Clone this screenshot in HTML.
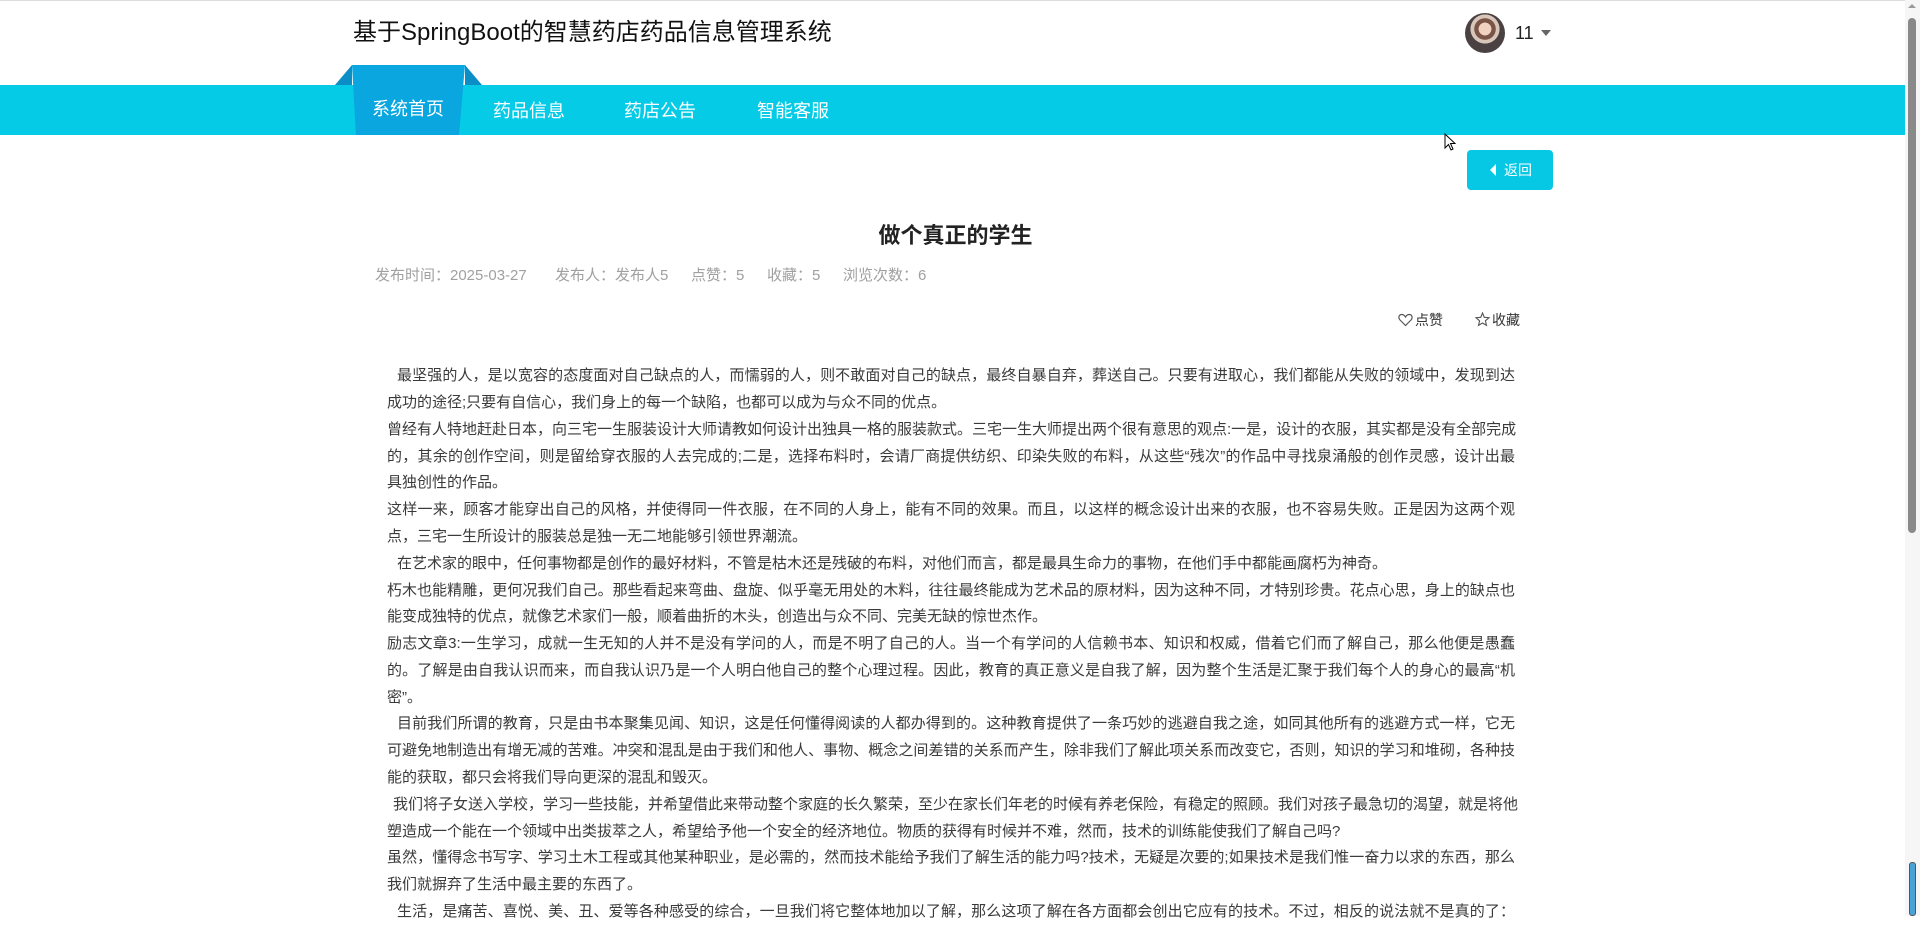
<!DOCTYPE html>
<html><head><meta charset="utf-8">
<style>
*{margin:0;padding:0;box-sizing:border-box}
html,body{width:1920px;height:916px;overflow:hidden;background:#fff;font-family:"Liberation Sans","Noto Sans CJK SC",sans-serif}
.a{position:absolute;white-space:nowrap}
.ln{position:absolute;left:387px;width:1128px;height:27px;line-height:27px;font-size:15px;color:#3a3a3a;white-space:nowrap;overflow:visible}
.f{text-align:justify;text-align-last:justify}
.meta{position:absolute;top:266px;font-size:15px;color:#a0a0a0;white-space:nowrap;line-height:20px}
</style></head><body>
<div class="a" style="left:0;top:0;width:1905px;height:1px;background:#dcdcdc"></div>
<div class="a" style="left:353px;top:16px;font-size:24px;line-height:34px;color:#111">基于SpringBoot的智慧药店药品信息管理系统</div>
<div class="a" style="left:1465px;top:13px;width:40px;height:40px;border-radius:50%;overflow:hidden;background:radial-gradient(circle at 50% 40%,#f1d2c0 0 20%,#7a5545 21% 34%,#d8c6ba 35% 46%,#4a4242 47% 100%)"></div>
<div class="a" style="left:1515px;top:21px;font-size:18px;line-height:24px;color:#222">11</div>
<div class="a" style="left:1541px;top:30px;width:0;height:0;border-left:5px solid transparent;border-right:5px solid transparent;border-top:6px solid #666"></div>
<div class="a" style="left:0;top:85px;width:1905px;height:50px;background:#05cbe6"></div>
<svg class="a" style="left:330px;top:60px" width="160" height="80" viewBox="330 60 160 80">
<polygon points="335,85 352,65 352,85" fill="#0b8ec5"/>
<polygon points="465,65 482,85 465,85" fill="#0b8ec5"/>
<polygon points="352,65 465,65 459,135 356,135" fill="#09a6df"/>
</svg>
<div class="a" style="left:372px;top:96px;font-size:18px;line-height:26px;color:#fff">系统首页</div>
<div class="a" style="left:493px;top:98px;font-size:18px;line-height:26px;color:#fff">药品信息</div>
<div class="a" style="left:624px;top:98px;font-size:18px;line-height:26px;color:#fff">药店公告</div>
<div class="a" style="left:757px;top:98px;font-size:18px;line-height:26px;color:#fff">智能客服</div>
<svg class="a" style="left:1444px;top:133px" width="14" height="20" viewBox="0 0 14 20"><path d="M1 1 L1 15 L4.5 11.5 L7 17 L9 16 L6.5 10.5 L11 10.5 Z" fill="#fff" stroke="#000" stroke-width="1"/></svg>
<div class="a" style="left:1467px;top:150px;width:86px;height:40px;border-radius:4px;background:#06c8e5"></div>
<div class="a" style="left:1490px;top:164px;width:0;height:0;border-top:6px solid transparent;border-bottom:6px solid transparent;border-right:6px solid #fff"></div>
<div class="a" style="left:1504px;top:160px;font-size:14px;line-height:20px;color:#fff">返回</div>
<div class="a" style="left:0;width:1905px;top:221px;text-align:center;font-size:22px;font-weight:bold;line-height:30px;color:#222"><span style="position:relative;left:3px">做个真正的学生</span></div>
<div class="meta" style="left:375px">发布时间：2025-03-27</div>
<div class="meta" style="left:555px">发布人：发布人5</div>
<div class="meta" style="left:691px">点赞：5</div>
<div class="meta" style="left:767px">收藏：5</div>
<div class="meta" style="left:843px">浏览次数：6</div>
<svg class="a" style="left:1398px;top:313px" width="15" height="14" viewBox="0 0 15 14"><path d="M7.5 12.5 L2 7 C0 5 0.8 1.5 3.8 1.5 C5.5 1.5 6.8 2.8 7.5 4 C8.2 2.8 9.5 1.5 11.2 1.5 C14.2 1.5 15 5 13 7 Z" fill="none" stroke="#555" stroke-width="1.2"/></svg>
<div class="a" style="left:1415px;top:310px;font-size:14px;line-height:20px;color:#333">点赞</div>
<svg class="a" style="left:1475px;top:312px" width="15" height="15" viewBox="0 0 15 15"><path d="M7.5 1 L9.3 5.3 L14 5.7 L10.4 8.8 L11.5 13.4 L7.5 11 L3.5 13.4 L4.6 8.8 L1 5.7 L5.7 5.3 Z" fill="none" stroke="#555" stroke-width="1.1"/></svg>
<div class="a" style="left:1492px;top:310px;font-size:14px;line-height:20px;color:#333">收藏</div>

<div class="ln f" style="top:362px;padding-left:10px">最坚强的人，是以宽容的态度面对自己缺点的人，而懦弱的人，则不敢面对自己的缺点，最终自暴自弃，葬送自己。只要有进取心，我们都能从失败的领域中，发现到达</div>
<div class="ln" style="top:389px">成功的途径;只要有自信心，我们身上的每一个缺陷，也都可以成为与众不同的优点。</div>
<div class="ln f" style="top:416px">曾经有人特地赶赴日本，向三宅一生服装设计大师请教如何设计出独具一格的服装款式。三宅一生大师提出两个很有意思的观点:一是，设计的衣服，其实都是没有全部完成</div>
<div class="ln f" style="top:443px">的，其余的创作空间，则是留给穿衣服的人去完成的;二是，选择布料时，会请厂商提供纺织、印染失败的布料，从这些“残次”的作品中寻找泉涌般的创作灵感，设计出最</div>
<div class="ln" style="top:469px">具独创性的作品。</div>
<div class="ln f" style="top:496px">这样一来，顾客才能穿出自己的风格，并使得同一件衣服，在不同的人身上，能有不同的效果。而且，以这样的概念设计出来的衣服，也不容易失败。正是因为这两个观</div>
<div class="ln" style="top:523px">点，三宅一生所设计的服装总是独一无二地能够引领世界潮流。</div>
<div class="ln" style="top:550px;padding-left:10px">在艺术家的眼中，任何事物都是创作的最好材料，不管是枯木还是残破的布料，对他们而言，都是最具生命力的事物，在他们手中都能画腐朽为神奇。</div>
<div class="ln f" style="top:577px">朽木也能精雕，更何况我们自己。那些看起来弯曲、盘旋、似乎毫无用处的木料，往往最终能成为艺术品的原材料，因为这种不同，才特别珍贵。花点心思，身上的缺点也</div>
<div class="ln" style="top:603px">能变成独特的优点，就像艺术家们一般，顺着曲折的木头，创造出与众不同、完美无缺的惊世杰作。</div>
<div class="ln f" style="top:630px">励志文章3:一生学习，成就一生无知的人并不是没有学问的人，而是不明了自己的人。当一个有学问的人信赖书本、知识和权威，借着它们而了解自己，那么他便是愚蠢</div>
<div class="ln f" style="top:657px">的。了解是由自我认识而来，而自我认识乃是一个人明白他自己的整个心理过程。因此，教育的真正意义是自我了解，因为整个生活是汇聚于我们每个人的身心的最高“机</div>
<div class="ln" style="top:684px">密”。</div>
<div class="ln f" style="top:710px;padding-left:10px">目前我们所谓的教育，只是由书本聚集见闻、知识，这是任何懂得阅读的人都办得到的。这种教育提供了一条巧妙的逃避自我之途，如同其他所有的逃避方式一样，它无</div>
<div class="ln f" style="top:737px">可避免地制造出有增无减的苦难。冲突和混乱是由于我们和他人、事物、概念之间差错的关系而产生，除非我们了解此项关系而改变它，否则，知识的学习和堆砌，各种技</div>
<div class="ln" style="top:764px">能的获取，都只会将我们导向更深的混乱和毁灭。</div>
<div class="ln f" style="top:791px;padding-left:6px">我们将子女送入学校，学习一些技能，并希望借此来带动整个家庭的长久繁荣，至少在家长们年老的时候有养老保险，有稳定的照顾。我们对孩子最急切的渴望，就是将他</div>
<div class="ln" style="top:818px">塑造成一个能在一个领域中出类拔萃之人，希望给予他一个安全的经济地位。物质的获得有时候并不难，然而，技术的训练能使我们了解自己吗?</div>
<div class="ln f" style="top:844px">虽然，懂得念书写字、学习土木工程或其他某种职业，是必需的，然而技术能给予我们了解生活的能力吗?技术，无疑是次要的;如果技术是我们惟一奋力以求的东西，那么</div>
<div class="ln" style="top:871px">我们就摒弃了生活中最主要的东西了。</div>
<div class="ln f" style="top:898px;padding-left:10px">生活，是痛苦、喜悦、美、丑、爱等各种感受的综合，一旦我们将它整体地加以了解，那么这项了解在各方面都会创出它应有的技术。不过，相反的说法就不是真的了：</div>

<div class="a" style="left:1905px;top:0;width:15px;height:916px;background:#f6f6f6"></div>
<div class="a" style="left:1908px;top:4px;width:0;height:0;border-left:4px solid transparent;border-right:4px solid transparent;border-bottom:4px solid #999"></div>
<div class="a" style="left:1908px;top:18px;width:8px;height:515px;border-radius:4px;background:#8a8a8a"></div>
<div class="a" style="left:1909px;top:862px;width:7px;height:54px;border-radius:3px;background:#4aa3d6;border:1px solid #555"></div>
</body></html>
